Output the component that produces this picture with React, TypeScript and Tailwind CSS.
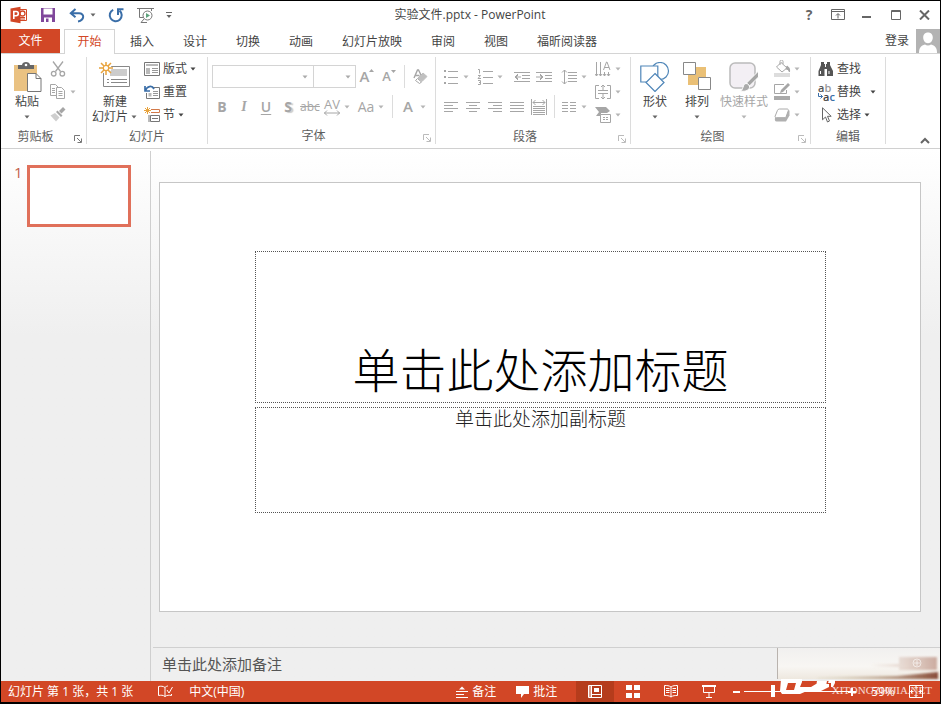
import type { ReactNode } from "react"

const SANS = "font-['Open_Sans','Noto_Sans_CJK_SC',sans-serif]"

const menuTabs = ["插入", "设计", "切换", "动画", "幻灯片放映", "审阅", "视图", "福昕阅读器"]

/* ---------- small building blocks ---------- */

function Caret({ className = "text-[#666]" }: { className?: string }) {
  return (
    <svg width="8" height="4" viewBox="0 0 8 4" className={"shrink-0 " + className} aria-hidden="true">
      <path d="M1.5 0.5h5L4 3.5z" fill="currentColor" />
    </svg>
  )
}

function Tool({ label, caret, children }: { label: string; caret?: boolean; children: ReactNode }) {
  return (
    <button type="button" aria-label={label} className="flex h-[23px] items-center text-[#a6a6a6]">
      <span className="flex w-[22px] items-center justify-center">{children}</span>
      {caret && <Caret className="text-[#b5b5b5]" />}
    </button>
  )
}

function BigButton({ icon, text, second, disabled }: { icon: ReactNode; text: string; second?: string; disabled?: boolean }) {
  return (
    <button
      type="button"
      className={"flex flex-col items-center pt-[5px] whitespace-nowrap " + (disabled ? "text-[#a6a6a6]" : "text-[#444]")}
    >
      {icon}
      <span className="h-[18px] leading-5">{text}</span>
      <span className="flex h-3.5 items-center gap-0.5 leading-3.5">
        {second}
        <Caret className={disabled ? "text-[#b5b5b5]" : "text-[#666]"} />
      </span>
    </button>
  )
}

function RowButton({ icon, text, caret }: { icon: ReactNode; text: string; caret?: "near" | "far" }) {
  return (
    <button type="button" className="flex h-[23px] items-center whitespace-nowrap text-[#444]">
      {icon}
      <span>{text}</span>
      {caret && <Caret className={caret === "far" ? "ml-2" : "ml-0.5"} />}
    </button>
  )
}

function Group({ title, launcher, muted, width, children }: { title: string; launcher?: boolean; muted?: boolean; width: string; children: ReactNode }) {
  return (
    <>
      <section className={"flex shrink-0 flex-col " + width}>
        <div className="flex h-[69px] items-start">{children}</div>
        <div className="flex h-6 items-center">
          <h2 className="flex-1 text-center text-[#5e5e5e]">{title}</h2>
          {launcher && (
            <button type="button" aria-label={title + "选项"} className={"flex w-4 pt-1 pl-1 " + (muted ? "text-[#bbb]" : "text-[#777]")}>
              <svg width="8" height="8" viewBox="0 0 8 8" fill="none" stroke="currentColor">
                <path d="M0.5 6V0.5H6M3 3l4 4M7.5 3.5v4h-4" />
              </svg>
            </button>
          )}
        </div>
      </section>
      <span className="h-[87px] w-px shrink-0 bg-[#dcdcdc]" />
    </>
  )
}

function Divider({ className }: { className: string }) {
  return <span className={"h-[23px] w-px bg-[#dcdcdc] " + className} />
}

/* ---------- title bar ---------- */

function TitleBar() {
  return (
    <header className="flex h-7 shrink-0 items-center">
      <div className="flex flex-1 items-center pl-[9px]">
        <svg width="18" height="18" viewBox="0 0 18 18" aria-label="PowerPoint">
          <path d="M9 3.500h7.500v11H9z" fill="#fff" stroke="#d24726" />
          <circle cx="12.500" cy="7.500" r="2.500" fill="none" stroke="#d24726" strokeWidth="1.300" />
          <path d="M10 11.500h5M10 13h5" stroke="#d24726" />
          <path d="M0.500 2.500L10.500 0.800v16.400L0.500 15.500z" fill="#d24726" />
          <path d="M3.800 13V5.500h2.400a2 2 0 0 1 0 4.200H4" fill="none" stroke="#fff" strokeWidth="1.600" />
        </svg>
        <button type="button" aria-label="保存" className="ml-3">
          <svg width="16" height="16" viewBox="0 0 16 16">
            <path d="M1 1h14v14H1z" fill="#80479b" />
            <path d="M3.500 1.500h9v6h-9zM4 10.500h8V15H4z" fill="#fff" />
            <path d="M6 11.500h2.500V15H6z" fill="#80479b" />
          </svg>
        </button>
        <button type="button" aria-label="撤消" className="ml-[13px] flex items-center gap-1">
          <svg width="16" height="15" viewBox="0 0 16 15" fill="none" stroke="#3a6ea8" strokeWidth="2">
            <path d="M6.500 1L1.800 5.300l4.700 4M2.500 5.300H10c6 0 5.500 7-1 8.200" />
          </svg>
          <Caret />
        </button>
        <button type="button" aria-label="恢复" className="ml-[11px]">
          <svg width="16" height="16" viewBox="0 0 16 16" fill="none" stroke="#3a6ea8" strokeWidth="2">
            <path d="M5.200 2.800a6 6 0 1 0 6.300 0.800M10 8V2.300h5.500" />
          </svg>
        </button>
        <button type="button" aria-label="从头开始" className="ml-[13px]">
          <svg width="17" height="17" viewBox="0 0 17 17" fill="none" stroke="#777">
            <path d="M0 1.500h17M2.500 2v8.500H7M7 12l-3 3.500h6" />
            <path d="M14.500 2v2" />
            <circle cx="10.500" cy="8.500" r="4.500" fill="#fff" />
            <path d="M9 6l4 2.500-4 2.500z" fill="#5ea37d" stroke="none" />
          </svg>
        </button>
        <button type="button" aria-label="自定义快速访问工具栏" className="ml-[11px] text-[#666]">
          <svg width="8" height="7" viewBox="0 0 8 7" fill="currentColor">
            <path d="M1 0h6v1H1zM1.500 3h5L4 6z" />
          </svg>
        </button>
      </div>
      <h1 className="text-[#444]">实验文件.pptx - PowerPoint</h1>
      <div className="flex flex-1 items-center justify-end pr-2.5 text-[#666]">
        <button type="button" aria-label="帮助" className="w-3 text-sm font-bold">?</button>
        <button type="button" aria-label="功能区显示选项" className="ml-4">
          <svg width="14" height="12" viewBox="0 0 14 12" fill="none" stroke="currentColor">
            <path d="M0.500 0.500h13v10H0.500zM0.500 2.500h13M7 9.500V5M5 6.500l2-2 2 2" />
          </svg>
        </button>
        <button type="button" aria-label="最小化" className="ml-[17px]">
          <svg width="10" height="10" viewBox="0 0 10 10"><path d="M0 6h9v2H0z" fill="currentColor" /></svg>
        </button>
        <button type="button" aria-label="最大化" className="ml-[19px]">
          <svg width="11" height="10" viewBox="0 0 11 10" fill="none" stroke="currentColor">
            <path d="M0.500 0.500h9v9h-9zM0 1.500h10" />
          </svg>
        </button>
        <button type="button" aria-label="关闭" className="ml-[17px]">
          <svg width="11" height="10" viewBox="0 0 11 10" stroke="currentColor" strokeWidth="2">
            <path d="M1 0.500l9 9M10 0.500l-9 9" />
          </svg>
        </button>
      </div>
    </header>
  )
}

function MenuBar() {
  return (
    <nav className="flex h-[25px] shrink-0 border-b border-[#d4d4d4]">
      <button type="button" className="w-[59px] bg-[#d24726] text-white">文件</button>
      <button type="button" className="-mb-px ml-1 w-[51px] border border-b-0 border-[#d4d4d4] bg-white text-[#d24726]">开始</button>
      <div className="ml-0.5 flex flex-1 gap-[3px] pt-px text-[#444]">
        {menuTabs.map((tab) => (
          <button key={tab} type="button" className="px-[13px] whitespace-nowrap">{tab}</button>
        ))}
      </div>
      <a href="#login" className="flex items-center gap-[7px] whitespace-nowrap text-[#444]">
        登录
        <svg width="24" height="24" viewBox="0 0 24 24">
          <path d="M0 0h24v24H0z" fill="#b3b3b3" />
          <path d="M12 3.500c3.200 0 4.800 2.200 4.800 5s-1.800 5.700-4.800 5.700-4.800-2.900-4.800-5.700 1.600-5 4.800-5zM3 24c0-5.500 2-7.300 6-8.500 1.800 1.200 4.200 1.200 6 0 4 1.200 6 3 6 8.500z" fill="#fff" />
        </svg>
      </a>
    </nav>
  )
}

/* ---------- ribbon groups ---------- */

function ClipboardGroup() {
  return (
    <Group title="剪贴板" launcher width="w-[85px]">
      <div className="pl-[11px]">
        <BigButton
          text="粘贴"
          icon={
            <svg width="30" height="30" viewBox="0 0 30 30">
              <path d="M2 3h23v26H2z" fill="#eac282" />
              <path d="M6 7V3h4c0-4 8-4 8 0h4v4z" fill="#666" />
              <circle cx="14" cy="3" r="1.300" fill="#fff" />
              <path d="M15.500 11.500h8.500l5 5v13H15.500z" fill="#fff" stroke="#777" />
              <path d="M24 11.500v5h5" fill="none" stroke="#777" />
            </svg>
          }
        />
      </div>
      <div className="flex flex-col pl-[5px]">
        <Tool label="剪切">
          <svg width="16" height="16" viewBox="0 0 16 16" fill="none" stroke="currentColor" strokeWidth="1.300">
            <path d="M3 0.500l7.500 10M13 0.500l-7.500 10" />
            <circle cx="3.700" cy="12.700" r="2.300" />
            <circle cx="12.300" cy="12.700" r="2.300" />
          </svg>
        </Tool>
        <Tool label="复制" caret>
          <svg width="16" height="15" viewBox="0 0 16 15" fill="#fff" stroke="currentColor">
            <path d="M0.500 0.500h5l3 3v8h-8z" />
            <path d="M6.500 3.500h5l3 3v8h-8z" />
            <path d="M2 4.500h3M2 6.500h3M2 8.500h3M8.500 7.500h4M8.500 9.500h4M8.500 11.500h4" />
          </svg>
        </Tool>
        <Tool label="格式刷">
          <svg width="16" height="15" viewBox="0 0 16 15" fill="currentColor">
            <path d="M13 0l2.500 2.500-4 4L9 4zM7.500 3.500l5 5-1.500 1.500-5-5z" />
            <path d="M5 6l4.500 4.500L6 14.500 0.500 8.500z" opacity="0.550" />
          </svg>
        </Tool>
      </div>
    </Group>
  )
}

function SlidesGroup() {
  return (
    <Group title="幻灯片" width="w-[120px]">
      <div className="w-14 pl-[5px]">
        <BigButton
          text="新建"
          second="幻灯片"
          icon={
            <svg width="32" height="30" viewBox="0 0 32 30" fill="none">
              <path d="M4.500 4.500h26v20h-26z" fill="#fff" stroke="#888" />
              <path d="M11 7h17v7H11z" fill="#ccc" />
              <path d="M8 17.500h2M12 17.500h16M8 20.500h2M12 20.500h16" stroke="#888" />
              <circle cx="7" cy="6" r="5.500" fill="#fff" />
              <path d="M7 -1v14M0 6h14M2 1l10 10M12 1L2 11" stroke="#e8a33d" strokeWidth="1.500" />
              <circle cx="7" cy="6" r="2.700" fill="#fff" stroke="#e8a33d" strokeWidth="1.200" />
            </svg>
          }
        />
      </div>
      <div className="flex flex-col pl-px">
        <RowButton
          text="版式"
          caret="near"
          icon={
            <svg width="19" height="14" viewBox="0 0 19 14" fill="none" stroke="#777">
              <path d="M0.500 0.500h15v13h-15z" />
              <path d="M2 2h12v2H2zM2 6h4v6H2z" fill="#b9b9b9" stroke="none" />
              <path d="M8 6.500h6M8 8.500h6M8 10.500h6" stroke="#999" />
            </svg>
          }
        />
        <RowButton
          text="重置"
          icon={
            <svg width="19" height="14" viewBox="0 0 19 14" fill="none" stroke="#777">
              <path d="M9 2.500h6.500v11h-13V8" />
              <path d="M4.500 8h3v3.500h-3z" fill="#b9b9b9" stroke="none" />
              <path d="M9 6.500h5M9 8.500h5M9 10.500h5" stroke="#999" />
              <path d="M1 1v5h5M1.500 5.500C3 1 8 0 10 4" stroke="#3a6ea8" strokeWidth="1.700" />
            </svg>
          }
        />
        <RowButton
          text="节"
          caret="near"
          icon={
            <svg width="19" height="16" viewBox="0 0 19 16" fill="none" stroke="#777">
              <path d="M7 2.500h8.500v3H7" stroke="#d27a4a" />
              <path d="M6.500 8.500h9v6h-9zM5 8v7M8 11.500h6" />
              <path d="M3.500 0v7M0 3.500h7M1 1l5 5M6 1L1 6" stroke="#e8a33d" />
            </svg>
          }
        />
      </div>
    </Group>
  )
}

function FontGroup() {
  return (
    <Group title="字体" launcher muted width="w-[227px]">
      <div className="flex flex-col gap-[7px] pt-2 pl-[3px] text-sm text-[#9c9c9c]">
        <div className="flex items-center pl-px">
          <label className="flex h-[23px] w-[102px] items-center border border-[#d4d4d4] pr-1">
            <select aria-label="字体名称" className="min-w-0 flex-1 appearance-none outline-none"><option></option></select>
            <Caret className="text-[#aaa]" />
          </label>
          <label className="flex h-[23px] w-[42px] items-center border border-l-0 border-[#d4d4d4] pr-[3px]">
            <select aria-label="字号" className="min-w-0 flex-1 appearance-none outline-none"><option></option></select>
            <Caret className="text-[#aaa]" />
          </label>
          <Tool label="增大字号">
            <span className="text-[15px] font-semibold">A</span>
            <svg width="5" height="14" viewBox="0 0 5 14"><path d="M0 3h5L2.500 0z" fill="currentColor" /></svg>
          </Tool>
          <Tool label="减小字号">
            <span className="text-[13px] font-semibold">A</span>
            <svg width="5" height="14" viewBox="0 0 5 14"><path d="M0 0h5L2.500 3z" fill="currentColor" /></svg>
          </Tool>
          <Divider className="mr-1 ml-1" />
          <Tool label="清除所有格式">
            <svg width="15" height="16" viewBox="0 0 15 16" fill="none" stroke="currentColor">
              <path d="M1 9L4.500 1h1L8 6M2.500 6.500h4" strokeWidth="1.400" />
              <path d="M10 4l4 3.500-5 5-4-3.500z" fill="currentColor" opacity="0.700" />
              <path d="M4.500 9.500l4 3.500-2 1.500-4-3z" fill="#fff" />
            </svg>
          </Tool>
        </div>
        <div className="flex items-center">
          <Tool label="加粗"><b>B</b></Tool>
          <Tool label="倾斜"><i className="font-['Liberation_Serif',serif] font-bold">I</i></Tool>
          <Tool label="下划线"><span className="font-semibold underline underline-offset-2">U</span></Tool>
          <Tool label="文字阴影"><b className="text-shadow-[2px_1px_1px_#ccc]">S</b></Tool>
          <Tool label="删除线"><span className="text-xs line-through">abc</span></Tool>
          <Tool label="字符间距" caret>
            <span className="flex flex-col items-center">
              <span className="h-3 text-[13px] leading-3">AV</span>
              <svg width="16" height="6" viewBox="0 0 16 6" fill="none" stroke="currentColor"><path d="M0 3h16M3 0.500L0.500 3 3 5.500M13 0.500L15.500 3 13 5.500" /></svg>
            </span>
          </Tool>
          <span className="w-1" />
          <Tool label="更改大小写" caret>Aa</Tool>
          <Divider className="mr-1 ml-[7px]" />
          <Tool label="字体颜色" caret><span className="text-[15px] font-semibold">A</span></Tool>
        </div>
      </div>
    </Group>
  )
}

function LinesIcon({ d }: { d: string }) {
  return (
    <svg width="16" height="16" viewBox="0 0 16 16" fill="none" stroke="currentColor" aria-hidden="true">
      <path d={d} />
    </svg>
  )
}

function ParagraphGroup() {
  return (
    <Group title="段落" launcher muted width="w-[194px]">
      <div className="flex flex-col gap-[7px] pt-2 pl-1">
        <div className="flex items-center">
          <Tool label="项目符号" caret>
            <LinesIcon d="M5 2.500h10M5 8.500h10M5 14.500h10M1 2.500h2M1 1.500h2M1 8.500h2M1 7.500h2M1 14.500h2M1 13.500h2" />
          </Tool>
          <span className="w-1" />
          <Tool label="编号" caret>
            <LinesIcon d="M6 2.500h10M6 8.500h10M6 14.500h10M1 0.500h1.500v4M1 6.500h2.500L1 9.500h3M1 11.500h2.500v4H1M2 13.500h1" />
          </Tool>
          <span className="w-[7px]" />
          <Tool label="降低列表级别">
            <LinesIcon d="M0 3.500h16M8 6.500h8M8 9.500h8M0 12.500h16M1 8h6M4 5L1 8l3 3M4 6L2 8l2 2" />
          </Tool>
          <Tool label="提高列表级别">
            <LinesIcon d="M0 3.500h16M9 6.500h7M9 9.500h7M0 12.500h16M0 8h7M4 5l3 3-3 3M4 6l2 2-2 2" />
          </Tool>
          <span className="w-[3px]" />
          <Tool label="行距" caret>
            <LinesIcon d="M3.500 1v14M1 3.500L3.500 1 6 3.500M1 12.500L3.500 15 6 12.500M7 3.500h9M7 6.500h9M7 9.500h9M7 12.500h9" />
          </Tool>
        </div>
        <div className="flex items-center">
          <Tool label="左对齐"><LinesIcon d="M1 3.500h14M1 6.500h9M1 9.500h14M1 12.500h9" /></Tool>
          <Tool label="居中"><LinesIcon d="M1 3.500h14M4 6.500h8M1 9.500h14M4 12.500h8" /></Tool>
          <Tool label="右对齐"><LinesIcon d="M1 3.500h14M6 6.500h9M1 9.500h14M6 12.500h9" /></Tool>
          <Tool label="两端对齐"><LinesIcon d="M1 3.500h14M1 6.500h14M1 9.500h14M1 12.500h14" /></Tool>
          <Tool label="分散对齐">
            <LinesIcon d="M0.500 0v16M15.500 0v16M2 3.500h12M4.500 1L2 3.500 4.500 6M11.500 1L14 3.500 11.500 6M2 7.500h12M2 9.500h12M2 11.500h12M2 13.500h12M2 15.500h12" />
          </Tool>
          <Divider className="mr-[3px] ml-1" />
          <Tool label="分栏" caret>
            <LinesIcon d="M1 3.500h6M9 3.500h6M1 6.500h6M9 6.500h6M1 9.500h6M9 9.500h6M1 12.500h6M9 12.500h6" />
          </Tool>
        </div>
      </div>
      <div className="flex flex-col pl-1">
        <Tool label="文字方向" caret>
          <LinesIcon d="M1.500 1v14M5.500 1v14M0 13l1.500 2L3 13M4 13l1.500 2L7 13M9.500 11v4M13.500 11v4M8 13l1.500 2 1.500-2M12 13l1.500 2 1.500-2M8.500 9L11.500 1h0.500L15 9M9.500 6.500h4.500" />
        </Tool>
        <Tool label="对齐文本" caret>
          <LinesIcon d="M4 1.500H0.500v13H4M12 1.500h3.500v13H12M8 1v5M6 3l2-2 2 2M8 10v5M6 13l2 2 2-2M3 6.500h10M3 9.500h10" />
        </Tool>
        <Tool label="转换为 SmartArt" caret>
          <svg width="16" height="16" viewBox="0 0 16 16" fill="none" stroke="currentColor">
            <path d="M0 0h11l4 4-3 2H6v3H1l3-4z" fill="currentColor" stroke="none" />
            <path d="M5.500 7.500h10v8h-10z" fill="#fff" />
            <path d="M8 10.500h5M8 12.500h5" strokeDasharray="2 1" />
          </svg>
        </Tool>
      </div>
    </Group>
  )
}

function DrawingGroup() {
  return (
    <Group title="绘图" launcher muted width="w-[179px]">
      <div className="grid grid-cols-[42px_42px_52px] justify-items-center pl-[3px]">
        <BigButton
          text="形状"
          icon={
            <svg width="30" height="30" viewBox="0 0 30 30" fill="#fff" stroke="#4f86b8" strokeWidth="1.200">
              <circle cx="20" cy="9" r="8.500" />
              <path d="M0.800 4h17v16h-17z" />
              <path d="M15 11.500l9 9-9 9-9-9z" />
            </svg>
          }
        />
        <BigButton
          text="排列"
          icon={
            <svg width="28" height="30" viewBox="0 0 28 30" fill="#fff" stroke="#888">
              <path d="M5 13h10v10H5zM13 5h10v10H13z" fill="#eac076" stroke="none" />
              <path d="M0.500 0.500h12v12h-12zM15.500 15.500h12v12h-12z" />
            </svg>
          }
        />
        <BigButton
          text="快速样式"
          disabled
          icon={
            <svg width="30" height="30" viewBox="0 0 30 30">
              <rect x="1" y="1" width="25" height="25" rx="5" fill="#f3eff4" stroke="#bbb" strokeWidth="1.500" />
              <path d="M29.500 9v6l-9 9-3-3z" fill="#a6a6a6" stroke="#fff" />
              <path d="M17 21.500c2 0 4 2 3.500 4-1 4-6 4-9 3.500 3-1 2-7 5.500-7.500z" fill="#aaa" stroke="#fff" />
            </svg>
          }
        />
      </div>
      <div className="flex flex-col pl-px">
        <Tool label="形状填充" caret>
          <svg width="17" height="17" viewBox="0 0 17 17" fill="none" stroke="currentColor">
            <path d="M7 2.500l6 5.500-5 4-5.500-5zM6 5V1.500c0-2 3-2 3 0V4" />
            <path d="M13 6c2 1 3 3 2.500 6-1-2-2-3-3.500-3z" fill="currentColor" />
            <path d="M0 13h16v4H0z" fill="#ddd" stroke="none" />
          </svg>
        </Tool>
        <Tool label="形状轮廓" caret>
          <svg width="17" height="17" viewBox="0 0 17 17" fill="none" stroke="currentColor">
            <path d="M10 1.500H0.500v9h12V7" />
            <path d="M14 0l2 2-7 7-3 1 1-3z" fill="currentColor" stroke="none" />
            <path d="M0 13h16v4H0z" fill="#aaa" stroke="none" />
          </svg>
        </Tool>
        <Tool label="形状效果" caret>
          <svg width="16" height="14" viewBox="0 0 16 14">
            <path d="M5 2.500h10.500v5L12 13.500H2.500C1 13.500 0.500 12 1 10z" fill="#b0b0b0" />
            <path d="M5.500 1h7.500c1.200 0 1.700 0.800 1.200 2l-2 5.500c-0.300 0.800-1 1.200-2 1.200H2.500c-1.200 0-1.700-0.700-1.300-1.700L3.500 2.300C3.800 1.500 4.500 1 5.500 1z" fill="#fff" stroke="#aaa" />
          </svg>
        </Tool>
      </div>
    </Group>
  )
}

function EditGroup() {
  return (
    <Group title="编辑" width="w-[74px]">
      <div className="flex flex-col pl-[7px]">
        <RowButton
          text="查找"
          icon={
            <svg width="19" height="14" viewBox="0 0 19 14" fill="#555">
              <path d="M3 0h3v2h1v3h1V2h1V0h3v3l3 6v5H9V7H6.500v7H0.500V9L3 3z" />
              <path d="M2.500 9v3M11 9v3" stroke="#fff" />
            </svg>
          }
        />
        <RowButton
          text="替换"
          caret="far"
          icon={
            <span className="flex w-[19px] flex-col text-[11px] leading-[9px]">
              <span className="text-left font-semibold text-[#555]">a<span className="text-[#999]">b</span></span>
              <span className="flex items-center font-semibold text-[#444]">
                <svg width="5" height="6" viewBox="0 0 5 6" fill="none" stroke="#3a6ea8">
                  <path d="M0.500 0v3.500h4M2.500 1.500l2 2-2 2" />
                </svg>
                a<span className="text-[#3a6ea8]">c</span>
              </span>
            </span>
          }
        />
        <RowButton
          text="选择"
          caret="near"
          icon={
            <svg width="19" height="16" viewBox="0 0 19 16" fill="#fff" stroke="#666">
              <path d="M4.500 0.800v12l3-2.800 2 5 2-1-2-4.700h3.700z" />
            </svg>
          }
        />
      </div>
    </Group>
  )
}

function Ribbon() {
  return (
    <div className="flex h-[95px] shrink-0 border-b border-[#d0d0d0] pt-[3px]">
      <ClipboardGroup />
      <SlidesGroup />
      <FontGroup />
      <ParagraphGroup />
      <DrawingGroup />
      <EditGroup />
      <div className="flex flex-1 items-end justify-end pr-2.5 pb-1">
        <button type="button" aria-label="折叠功能区">
          <svg width="10" height="7" viewBox="0 0 10 7" fill="none" stroke="#666" strokeWidth="2">
            <path d="M1 6l4-4 4 4" />
          </svg>
        </button>
      </div>
    </div>
  )
}

/* ---------- slide area ---------- */

function Workspace() {
  return (
    <div className="flex min-h-0 flex-1 bg-linear-to-b from-white to-[#efefef] to-35%">
      <aside className="mt-0.5 flex w-[150px] shrink-0 items-start border-r border-[#cfcfcf] pt-3.5 pl-[13px]">
        <span className="w-[13px] text-[15px] leading-3.5 text-[#c4604a]">1</span>
        <button type="button" aria-label="幻灯片 1" className="h-[62px] w-[104px] border-3 border-[#e0705a] bg-white" />
      </aside>
      <main className="flex min-w-0 flex-1 flex-col">
        <div className="flex flex-1 pt-[33px] pr-[19px] pb-[35px] pl-2">
          <div className="flex flex-1 flex-col gap-1 border border-[#c6c6c6] bg-white pt-[68px] pr-[94px] pb-[98px] pl-[95px] font-['Noto_Sans_CJK_SC',sans-serif]">
            <div className="flex flex-[152] items-end justify-center border border-dotted border-[#555]">
              <p className="mb-1.5 text-[47px] leading-[56px] font-light text-black">单击此处添加标题</p>
            </div>
            <div className="flex flex-[106] items-start justify-center border border-dotted border-[#555]">
              <p className="text-[19px] leading-5 font-light text-[#222]">单击此处添加副标题</p>
            </div>
          </div>
        </div>
        <label className="ml-0.5 flex h-[34px] border-t border-[#d0d0d0]">
          <input aria-label="备注" placeholder="单击此处添加备注" className="w-full px-[9px] pb-0.5 text-[15px] outline-none placeholder:text-[#555]" />
        </label>
      </main>
    </div>
  )
}

/* ---------- status bar ---------- */

function StatusBar() {
  return (
    <footer className="flex h-[21px] shrink-0 items-center bg-[#d24726] whitespace-nowrap text-white">
      <span className="pl-[7px]">幻灯片 第 1 张，共 1 张</span>
      <button type="button" aria-label="拼写检查" className="ml-[25px]">
        <svg width="15" height="13" viewBox="0 0 15 13" fill="none" stroke="#fff">
          <path d="M7 2.500C5 1 3 1 0.500 1.500v9c2.500-0.500 4.500-0.500 6.500 1V2.500C8 1.500 9 1 10 1M7 11.500c2-1.500 4-1.500 6.500-1V9M9 5l2 3 3.500-6" />
        </svg>
      </button>
      <button type="button" className="ml-4">中文(中国)</button>
      <div className="flex flex-1 items-center justify-end pr-[17px]">
        <button type="button" className="flex items-center gap-1">
          <svg width="12" height="12" viewBox="0 0 12 12" fill="none" stroke="#fff">
            <path d="M0 5.500h12M0 8.500h8M0 11.500h12" /><path d="M3 3.500h6L6 0.500z" fill="#fff" stroke="none" />
          </svg>
          备注
        </button>
        <button type="button" className="ml-5 flex items-center gap-1">
          <svg width="13" height="12" viewBox="0 0 13 12" fill="#fff"><path d="M0 0h13v8H8l-3 4V8H0z" /></svg>
          批注
        </button>
        <button type="button" aria-label="普通视图" className="ml-[19px] flex h-[21px] w-[38px] items-center justify-center bg-[#b53c1c]">
          <svg width="14" height="13" viewBox="0 0 14 13" fill="none" stroke="#fff">
            <path d="M0.500 0.500h13v12H0.500zM3.500 0.500v12M3.500 9.500h10" /><path d="M6 3h5v4H6z" fill="#fff" stroke="none" />
            <path d="M2 1v11" />
          </svg>
        </button>
        <button type="button" aria-label="幻灯片浏览" className="flex w-[38px] justify-center">
          <svg width="14" height="13" viewBox="0 0 14 13" fill="#fff"><path d="M0 0h6v5H0zM8 0h6v5H8zM0 8h6v5H0zM8 8h6v5H8z" /></svg>
        </button>
        <button type="button" aria-label="阅读视图" className="flex w-[38px] justify-center">
          <svg width="14" height="13" viewBox="0 0 14 13" fill="none" stroke="#fff">
            <path d="M7 2C5 0.500 3 0.500 0.500 0.500v10c2.500 0 4.500 0 6.500 1.500 2-1.500 4-1.500 6.500-1.500v-10C11 0.500 9 0.500 7 2zM7 2v10" />
            <path d="M2 3.500h3.500M2 5.500h3.500M2 7.500h3.500M8.500 3.500H12M8.500 5.500H12M8.500 7.500H12" />
          </svg>
        </button>
        <button type="button" aria-label="幻灯片放映" className="flex w-[38px] justify-center">
          <svg width="14" height="13" viewBox="0 0 14 13" fill="none" stroke="#fff">
            <path d="M0 0.500h14M0 1.500h14M1.500 1v6.500h11V1M7 8v4M4 12.500h6" />
          </svg>
        </button>
        <button type="button" aria-label="缩小" className="ml-[5px]">
          <svg width="7" height="2" viewBox="0 0 7 2"><path d="M0 0h7v2H0z" fill="#fff" /></svg>
        </button>
        <input
          type="range"
          aria-label="缩放"
          min={0}
          max={100}
          defaultValue={27}
          className="ml-1 h-3 w-[104px] appearance-none bg-transparent [&::-webkit-slider-runnable-track]:h-px [&::-webkit-slider-runnable-track]:bg-white [&::-webkit-slider-thumb]:-mt-[6px] [&::-webkit-slider-thumb]:h-3 [&::-webkit-slider-thumb]:w-1 [&::-webkit-slider-thumb]:appearance-none [&::-webkit-slider-thumb]:bg-white"
        />
        <button type="button" aria-label="放大">
          <svg width="8" height="8" viewBox="0 0 8 8"><path d="M0 3h8v2H0zM3 0h2v8H3z" fill="#fff" /></svg>
        </button>
        <button type="button" className="ml-[15px]">59%</button>
        <button type="button" aria-label="适应窗口大小" className="ml-3.5">
          <svg width="14" height="13" viewBox="0 0 14 13" fill="none" stroke="#fff">
            <path d="M0.500 0.500h13v12H0.500zM7 1.500v3M5.500 3L7 1.500 8.500 3M7 11.500v-3M5.500 10L7 11.500 8.500 10M1.500 6.500h3M3 5L1.500 6.500 3 8M12.500 6.500h-3M11 5l1.500 1.500L11 8" />
          </svg>
        </button>
      </div>
    </footer>
  )
}

/* Site mark floating over the lower right corner of the window */
function SiteMark() {
  return (
    <div className="pointer-events-none absolute right-0 bottom-0 h-[54px] w-[163px]">
      <svg width="163" height="54" viewBox="0 0 163 54" aria-hidden="true">
        <defs>
          <linearGradient id="haze" x1="0" y1="0" x2="0" y2="1">
            <stop offset="0" stopColor="#f1f0ef" />
            <stop offset="0.600" stopColor="#f8f6f3" />
            <stop offset="1" stopColor="#eee8df" />
          </linearGradient>
          <linearGradient id="streak" x1="0" y1="0" x2="1" y2="0">
            <stop offset="0" stopColor="#c9a48f" stopOpacity="0" />
            <stop offset="1" stopColor="#a8705c" stopOpacity="0.550" />
          </linearGradient>
          <linearGradient id="shade" x1="0" y1="0" x2="1" y2="0">
            <stop offset="0" stopColor="#b9b48c" stopOpacity="0.100" />
            <stop offset="1" stopColor="#7d3a26" stopOpacity="0.900" />
          </linearGradient>
          <filter id="soft"><feGaussianBlur stdDeviation="1.200" /></filter>
        </defs>
        <path d="M0 0h163v31H0z" fill="url(#haze)" />
        <path d="M0.500 0v31" stroke="#b9b3ae" />
        <g filter="url(#soft)">
          <path d="M92 16h68v3H92zM122 9h38v13h-38z" fill="url(#streak)" />
          <path d="M40 29l80-1 41-4v7H40z" fill="url(#shade)" />
        </g>
        <circle cx="140" cy="15" r="4" fill="none" stroke="#fff" strokeOpacity="0.600" />
        <path d="M137 15h6M140 12v6" stroke="#fff" strokeOpacity="0.600" />
        {/* logo outline and its trailing stroke */}
        <path d="M4 31h21v3l-2 5h11l5-3h13v3l-8 4H30l-7 3H5l-2-3z" fill="#fff" />
        <path d="M11 35h8l-2 7H9z" fill="#d24726" />
        <path d="M40 33h10l-1 5H39zM52 32h6v3l-2 4h-2v-4h-3z" fill="#fff" />
      </svg>
      <span className="absolute right-2 bottom-1.5 font-['Liberation_Serif',serif] text-[11px] leading-3 text-white/80">XITONGZHIJIA.NET</span>
    </div>
  )
}

export default function App() {
  return (
    <div className={"relative flex h-screen flex-col overflow-hidden border border-b-2 border-black bg-white text-xs " + SANS}>
      <TitleBar />
      <MenuBar />
      <Ribbon />
      <Workspace />
      <StatusBar />
      <SiteMark />
    </div>
  )
}
